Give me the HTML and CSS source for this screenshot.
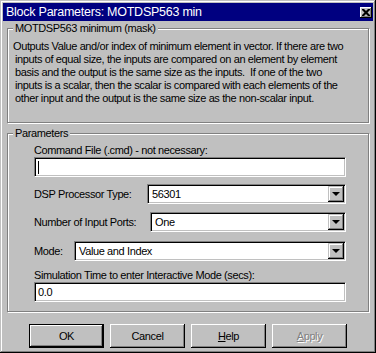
FILE: index.html
```html
<!DOCTYPE html>
<html>
<head>
<meta charset="utf-8">
<link rel="stylesheet" href="styles.css">
</head>
<body>
<div class="window">
  <div class="titlebar">
    <span class="title">Block Parameters: MOTDSP563 min</span>
    <span class="close"><svg width="8" height="7" viewBox="0 0 8 7"><path d="M0 0h2l2 2 2-2h2v1l-2.5 2.5L8 6v1H6L4 5 2 7H0V6l2.5-2.5L0 1z" fill="#000"/></svg></span>
  </div>
  <div class="group g1">
    <span class="legend">MOTDSP563 minimum (mask)</span>
    <p class="desc">Outputs Value and/or index of minimum element in vector. If there are two<br>inputs of equal size, the inputs are compared on an element by element<br>basis and the output is the same size as the inputs.&nbsp; If one of the two<br>inputs is a scalar, then the scalar is compared with each elements of the<br>other input and the output is the same size as the non-scalar input.</p>
  </div>
  <div class="group g2">
    <span class="legend">Parameters</span>
    <div class="caption">Command File (.cmd) - not necessary:</div>
    <div class="edit"><span class="caret"></span></div>
    <div class="row row1">
      <span>DSP Processor Type:</span>
      <div class="combo c1"><span class="val">56301</span><span class="drop"><span class="tri"></span></span></div>
    </div>
    <div class="row row2">
      <span>Number of Input Ports:</span>
      <div class="combo c2"><span class="val">One</span><span class="drop"><span class="tri"></span></span></div>
    </div>
    <div class="row row3">
      <span>Mode:</span>
      <div class="combo c3"><span class="val">Value and Index</span><span class="drop"><span class="tri"></span></span></div>
    </div>
    <div class="caption cap2">Simulation Time to enter Interactive Mode (secs):</div>
    <div class="edit">0.0</div>
  </div>
  <div class="buttons">
    <span class="btn default">OK</span>
    <span class="btn">Cancel</span>
    <span class="btn"><u>H</u>elp</span>
    <span class="btn disabled"><u>A</u>pply</span>
  </div>
</div>
</body>
</html>
```
FILE: styles.css
```css
* { box-sizing: border-box; }
body {
  margin: 0;
  background: #c0c0c0;
  font-family: "Liberation Sans", Arial, sans-serif;
  font-size: 11px;
  letter-spacing: -0.38px;
  color: #000;
}
.window {
  width: 376px;
  height: 353px;
  background: #c0c0c0;
  padding: 3px;
  display: flex;
  flex-direction: column;
  box-shadow: inset -1px -1px #000, inset 1px 1px #c0c0c0, inset -2px -2px #808080, inset 2px 2px #fff;
}
.titlebar {
  height: 18px;
  flex: none;
  background: #000080;
  color: #fff;
  display: flex;
  align-items: center;
  justify-content: space-between;
  padding: 0 1px 0 3px;
  font-size: 12.5px;
  letter-spacing: -0.25px;
}
.close {
  width: 12px;
  height: 11px;
  background: #c0c0c0;
  display: flex;
  align-items: center;
  justify-content: center;
  box-shadow: inset -1px -1px #000, inset 1px 1px #fff, inset -2px -2px #808080;
}
.close svg { display: block; }
.group {
  position: relative;
  flex: none;
  margin: 0 4px;
  border: 1px solid #808080;
  box-shadow: inset 1px 1px #fff, 1px 1px #fff;
}
.legend {
  position: absolute;
  top: -7px;
  left: 5px;
  padding: 0 2px;
  background: #c0c0c0;
  line-height: 13px;
  white-space: nowrap;
}
.g1 {
  margin-top: 7px;
  height: 95px;
  padding: 11px 0 0 7px;
}
.desc {
  margin: 0;
  line-height: 13px;
  text-indent: -2px;
  white-space: nowrap;
}
.g2 {
  margin-top: 10px;
  height: 179px;
  padding: 10px 22px 0 26px;
}
.caption { line-height: 13px; white-space: nowrap; }
.cap2 { margin-top: 8px; }
.edit {
  height: 20px;
  background: #fff;
  border: 1px solid;
  border-color: #808080 #fff #fff #808080;
  box-shadow: inset 1px 1px #000, inset -1px -1px #c0c0c0;
  padding: 2px 3px;
  line-height: 15px;
}
.caret {
  display: inline-block;
  width: 1px;
  height: 13px;
  background: #000;
  vertical-align: top;
  margin-top: 1px;
}
.row {
  display: flex;
  justify-content: space-between;
  align-items: center;
  height: 20px;
  white-space: nowrap;
}
.row1 { margin-top: 7px; }
.row2 { margin-top: 8px; }
.row3 { margin-top: 9px; }
.combo {
  height: 20px;
  background: #fff;
  border: 1px solid;
  border-color: #808080 #fff #fff #808080;
  box-shadow: inset 1px 1px #000, inset -1px -1px #c0c0c0;
  padding: 1px;
  display: flex;
}
.c1 { width: 199px; }
.c2 { width: 196px; }
.c3 { width: 272px; }
.val {
  flex: 1;
  padding-left: 3px;
  line-height: 17px;
}
.drop {
  width: 16px;
  height: 16px;
  background: #c0c0c0;
  display: flex;
  align-items: center;
  justify-content: center;
  box-shadow: inset -1px -1px #000, inset 1px 1px #c0c0c0, inset -2px -2px #808080, inset 2px 2px #fff;
}
.tri {
  width: 0;
  height: 0;
  border-left: 4px solid transparent;
  border-right: 4px solid transparent;
  border-top: 4px solid #000;
  margin-right: 1px;
}
.buttons {
  display: flex;
  gap: 6px;
  margin-top: 12px;
  padding-left: 26px;
}
.btn {
  width: 75px;
  height: 24px;
  display: flex;
  align-items: center;
  justify-content: center;
  box-shadow: inset -1px -1px #000, inset 1px 1px #fff, inset -2px -2px #808080;
}
.btn u { text-decoration: underline; }
.default {
  box-shadow: inset 0 0 0 1px #000, inset -2px -2px #000, inset 2px 2px #fff, inset -3px -3px #808080;
}
.disabled {
  color: #808080;
  text-shadow: 1px 1px #fff;
}
```
